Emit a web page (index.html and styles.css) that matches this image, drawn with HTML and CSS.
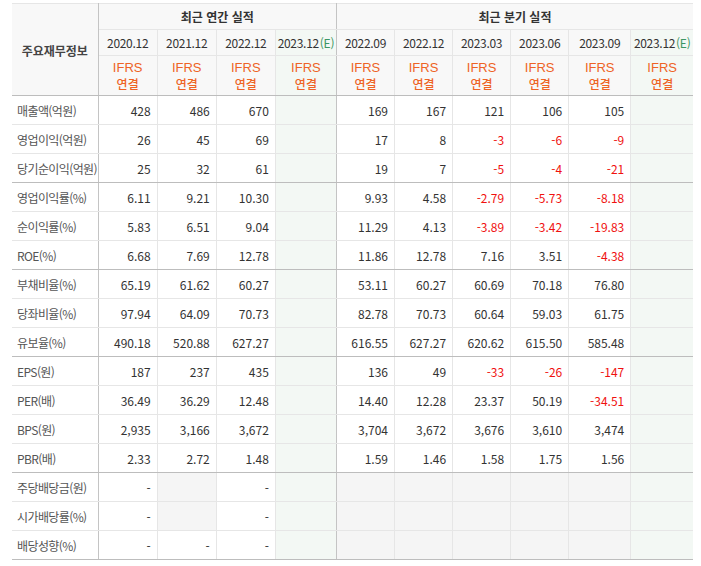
FILE: index.html
```html
<!DOCTYPE html>
<html lang="ko">
<head>
<meta charset="utf-8">
<title>주요재무정보</title>
<link rel="stylesheet" href="styles.css">
</head>
<body>
<div class="wrap">
<table class="fin">
<colgroup>
<col class="c-label">
<col class="c-a"><col class="c-a"><col class="c-a"><col class="c-ae">
<col class="c-q"><col class="c-q"><col class="c-q"><col class="c-q"><col class="c-q2"><col class="c-q2">
</colgroup>
<thead>
<tr class="h1">
<th rowspan="3" class="corner">주요재무정보</th>
<th colspan="4" class="grp sep">최근 연간 실적</th>
<th colspan="6" class="grp">최근 분기 실적</th>
</tr>
<tr class="h2">
<th>2020.12</th><th>2021.12</th><th>2022.12</th><th class="est sep">2023.12<span class="e">(E)</span></th>
<th>2022.09</th><th>2022.12</th><th>2023.03</th><th>2023.06</th><th>2023.09</th><th class="est">2023.12<span class="e">(E)</span></th>
</tr>
<tr class="h3">
<th><span class="ifrs">IFRS</span><br>연결</th><th><span class="ifrs">IFRS</span><br>연결</th><th><span class="ifrs">IFRS</span><br>연결</th><th class="est sep"><span class="ifrs">IFRS</span><br>연결</th>
<th><span class="ifrs">IFRS</span><br>연결</th><th><span class="ifrs">IFRS</span><br>연결</th><th><span class="ifrs">IFRS</span><br>연결</th><th><span class="ifrs">IFRS</span><br>연결</th><th><span class="ifrs">IFRS</span><br>연결</th><th class="est"><span class="ifrs">IFRS</span><br>연결</th>
</tr>
</thead>
<tbody>
<tr><th>매출액(억원)</th><td>428</td><td>486</td><td>670</td><td class="est sep"></td><td>169</td><td>167</td><td>121</td><td>106</td><td>105</td><td class="est"></td></tr>
<tr><th>영업이익(억원)</th><td>26</td><td>45</td><td>69</td><td class="est sep"></td><td>17</td><td>8</td><td class="neg">-3</td><td class="neg">-6</td><td class="neg">-9</td><td class="est"></td></tr>
<tr class="gend"><th>당기순이익(억원)</th><td>25</td><td>32</td><td>61</td><td class="est sep"></td><td>19</td><td>7</td><td class="neg">-5</td><td class="neg">-4</td><td class="neg">-21</td><td class="est"></td></tr>
<tr><th>영업이익률(%)</th><td>6.11</td><td>9.21</td><td>10.30</td><td class="est sep"></td><td>9.93</td><td>4.58</td><td class="neg">-2.79</td><td class="neg">-5.73</td><td class="neg">-8.18</td><td class="est"></td></tr>
<tr><th>순이익률(%)</th><td>5.83</td><td>6.51</td><td>9.04</td><td class="est sep"></td><td>11.29</td><td>4.13</td><td class="neg">-3.89</td><td class="neg">-3.42</td><td class="neg">-19.83</td><td class="est"></td></tr>
<tr class="gend"><th>ROE(%)</th><td>6.68</td><td>7.69</td><td>12.78</td><td class="est sep"></td><td>11.86</td><td>12.78</td><td>7.16</td><td>3.51</td><td class="neg">-4.38</td><td class="est"></td></tr>
<tr><th>부채비율(%)</th><td>65.19</td><td>61.62</td><td>60.27</td><td class="est sep"></td><td>53.11</td><td>60.27</td><td>60.69</td><td>70.18</td><td>76.80</td><td class="est"></td></tr>
<tr><th>당좌비율(%)</th><td>97.94</td><td>64.09</td><td>70.73</td><td class="est sep"></td><td>82.78</td><td>70.73</td><td>60.64</td><td>59.03</td><td>61.75</td><td class="est"></td></tr>
<tr class="gend"><th>유보율(%)</th><td>490.18</td><td>520.88</td><td>627.27</td><td class="est sep"></td><td>616.55</td><td>627.27</td><td>620.62</td><td>615.50</td><td>585.48</td><td class="est"></td></tr>
<tr><th>EPS(원)</th><td>187</td><td>237</td><td>435</td><td class="est sep"></td><td>136</td><td>49</td><td class="neg">-33</td><td class="neg">-26</td><td class="neg">-147</td><td class="est"></td></tr>
<tr><th>PER(배)</th><td>36.49</td><td>36.29</td><td>12.48</td><td class="est sep"></td><td>14.40</td><td>12.28</td><td>23.37</td><td>50.19</td><td class="neg">-34.51</td><td class="est"></td></tr>
<tr><th>BPS(원)</th><td>2,935</td><td>3,166</td><td>3,672</td><td class="est sep"></td><td>3,704</td><td>3,672</td><td>3,676</td><td>3,610</td><td>3,474</td><td class="est"></td></tr>
<tr class="gend"><th>PBR(배)</th><td>2.33</td><td>2.72</td><td>1.48</td><td class="est sep"></td><td>1.59</td><td>1.46</td><td>1.58</td><td>1.75</td><td>1.56</td><td class="est"></td></tr>
<tr><th>주당배당금(원)</th><td>-</td><td class="na"></td><td>-</td><td class="est sep"></td><td class="na"></td><td class="na"></td><td class="na"></td><td class="na"></td><td class="na"></td><td class="est"></td></tr>
<tr><th>시가배당률(%)</th><td>-</td><td class="na"></td><td>-</td><td class="est sep"></td><td class="na"></td><td class="na"></td><td class="na"></td><td class="na"></td><td class="na"></td><td class="est"></td></tr>
<tr class="last"><th>배당성향(%)</th><td>-</td><td>-</td><td>-</td><td class="est sep"></td><td class="na"></td><td class="na"></td><td class="na"></td><td class="na"></td><td class="na"></td><td class="est"></td></tr>
</tbody>
</table>
</div>
</body>
</html>
```
FILE: styles.css
```css
html, body {
  margin: 0;
  padding: 0;
  background: #fff;
}
.wrap {
  padding: 3px 8px 0 12px;
}
.fin {
  border-collapse: collapse;
  table-layout: fixed;
  width: 681px;
  font-family: "Noto Sans CJK KR", "Noto Sans", sans-serif;
  font-size: 12px;
  color: #333;
  border-top: 1px solid #bdbdbd;
  border-bottom: 1px solid #bdbdbd;
}
.c-label { width: 86px; }
.c-a { width: 59px; }
.c-ae { width: 61px; }
.c-q { width: 58px; }
.c-q2 { width: 62px; }

.fin th, .fin td {
  border: 1px solid #e6e6e6;
  padding: 0;
  line-height: 15px;
  white-space: nowrap;
  overflow: hidden;
}
.fin tr > :first-child { border-left: none; }
.fin tr > :last-child { border-right: none; }

.fin thead th {
  background: #f8f8f8;
  font-weight: normal;
  text-align: center;
  color: #333;
}
.fin thead th.corner {
  font-weight: 600;
  color: #444;
  padding-top: 2px;
  border-right: 1px solid #c4c4c4;
  border-bottom: 1px solid #bdbdbd;
}
.fin thead th.grp {
  font-weight: 600;
  color: #333;
}
.h1 { height: 26px; }
.h2 { height: 26px; }
.h3 { height: 40px; }
.fin thead .h3 th {
  color: #ee6325;
  font-weight: 500;
  line-height: 16px;
  padding-top: 0;
  border-bottom: 1px solid #bdbdbd;
}
.ifrs {
  font-family: "Liberation Sans", Arial, sans-serif;
  font-size: 13px;
}
.fin thead .h2 th { letter-spacing: -0.3px; }
.e { color: #3b9663; margin-left: 1px; }

.fin .sep { border-right: 1px solid #c4c4c4; }
.fin thead th.est, .fin td.est { background: #f3f8f4; }

.fin tbody tr { height: 29px; }
.fin tbody th {
  text-align: left;
  font-weight: normal;
  color: #555;
  padding-left: 5px;
  letter-spacing: -0.6px;
  border-right: 1px solid #c4c4c4;
}
.fin tbody td {
  text-align: right;
  padding-right: 6px;
  color: #333;
}
.fin td.neg { color: #f0110f; }
.fin td.na { background: #f5f5f5; }
.fin tr.gend > th, .fin tr.gend > td { border-bottom: 1px solid #bdbdbd; }
.fin tr.last > th, .fin tr.last > td { border-bottom: 1px solid #bdbdbd; }
```
